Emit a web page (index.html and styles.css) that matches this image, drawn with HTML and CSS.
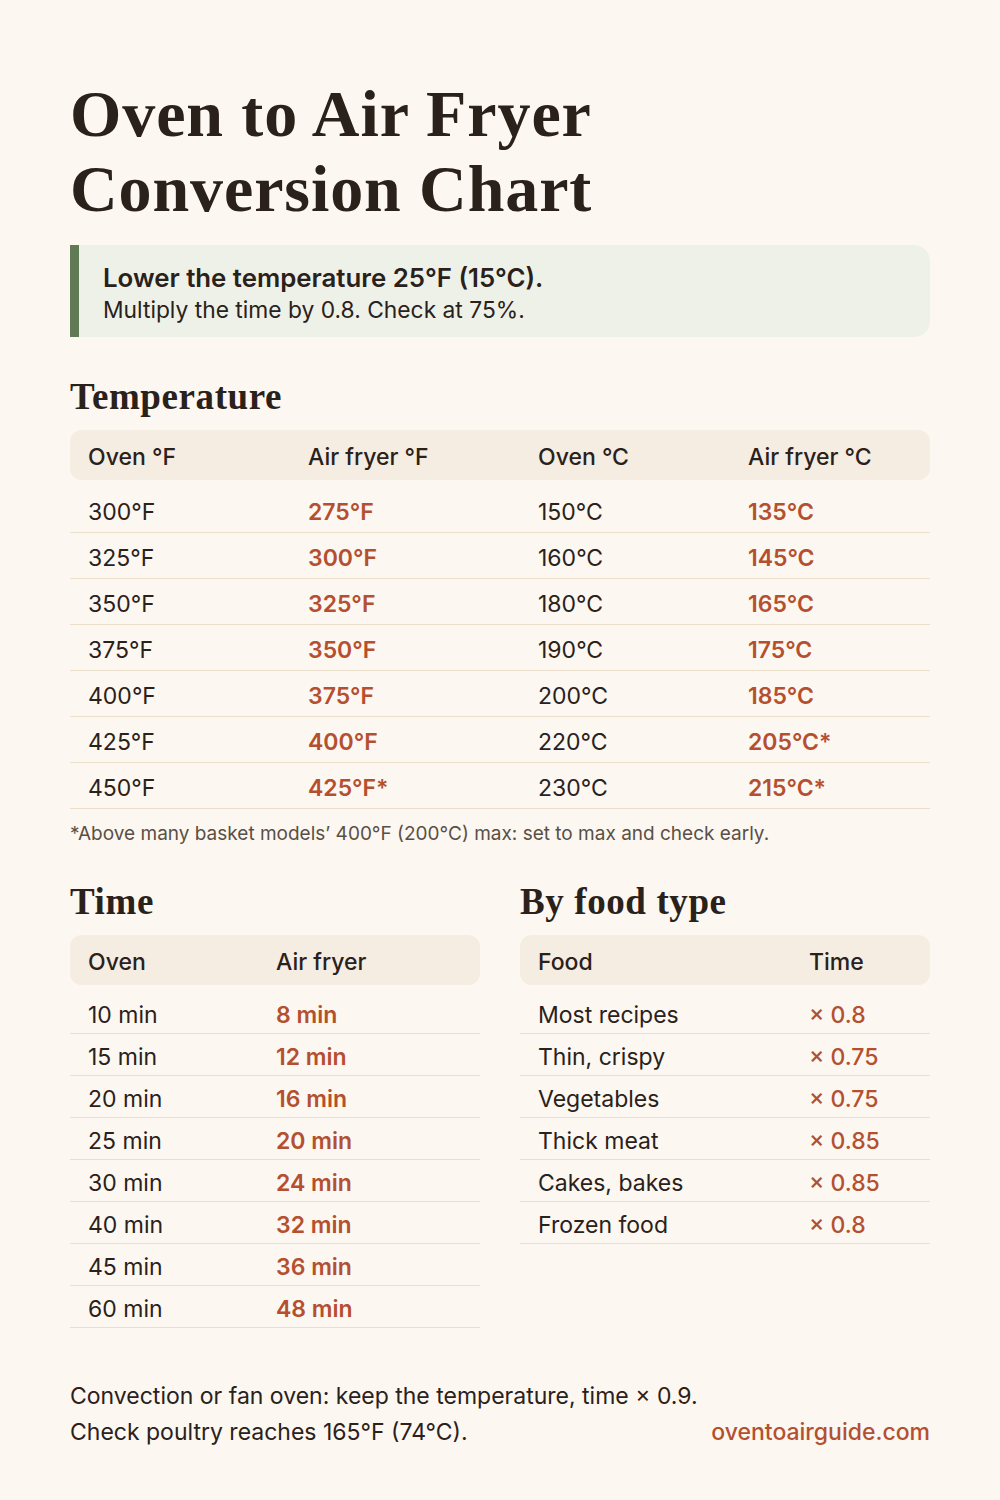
FILE: index.html
```html
<!DOCTYPE html>
<html lang="en">
<head>
<meta charset="utf-8">
<title>Oven to Air Fryer Conversion Chart</title>
<link rel="stylesheet" href="styles.css">
</head>
<body>
<main class="page">
  <h1 class="title">Oven to Air Fryer<br>Conversion Chart</h1>

  <div class="callout">
    <p class="callout-main">Lower the temperature 25°F (15°C).</p>
    <p class="callout-sub">Multiply the time by 0.8. Check at 75%.</p>
  </div>

  <section class="section">
    <h2 class="heading">Temperature</h2>
    <div class="table temp">
      <div class="thead"><span>Oven °F</span><span>Air fryer °F</span><span>Oven °C</span><span>Air fryer °C</span></div>
      <div class="row"><span>300°F</span><span class="hl">275°F</span><span>150°C</span><span class="hl">135°C</span></div>
      <div class="row"><span>325°F</span><span class="hl">300°F</span><span>160°C</span><span class="hl">145°C</span></div>
      <div class="row"><span>350°F</span><span class="hl">325°F</span><span>180°C</span><span class="hl">165°C</span></div>
      <div class="row"><span>375°F</span><span class="hl">350°F</span><span>190°C</span><span class="hl">175°C</span></div>
      <div class="row"><span>400°F</span><span class="hl">375°F</span><span>200°C</span><span class="hl">185°C</span></div>
      <div class="row"><span>425°F</span><span class="hl">400°F</span><span>220°C</span><span class="hl">205°C*</span></div>
      <div class="row"><span>450°F</span><span class="hl">425°F*</span><span>230°C</span><span class="hl">215°C*</span></div>
    </div>
    <p class="note">*Above many basket models’ 400°F (200°C) max: set to max and check early.</p>
  </section>

  <div class="split">
    <section class="col">
      <h2 class="heading">Time</h2>
      <div class="table time">
        <div class="thead"><span>Oven</span><span>Air fryer</span></div>
        <div class="row"><span>10 min</span><span class="hl">8 min</span></div>
        <div class="row"><span>15 min</span><span class="hl">12 min</span></div>
        <div class="row"><span>20 min</span><span class="hl">16 min</span></div>
        <div class="row"><span>25 min</span><span class="hl">20 min</span></div>
        <div class="row"><span>30 min</span><span class="hl">24 min</span></div>
        <div class="row"><span>40 min</span><span class="hl">32 min</span></div>
        <div class="row"><span>45 min</span><span class="hl">36 min</span></div>
        <div class="row"><span>60 min</span><span class="hl">48 min</span></div>
      </div>
    </section>
    <section class="col">
      <h2 class="heading">By food type</h2>
      <div class="table food">
        <div class="thead"><span>Food</span><span>Time</span></div>
        <div class="row"><span>Most recipes</span><span class="hl">× 0.8</span></div>
        <div class="row"><span>Thin, crispy</span><span class="hl">× 0.75</span></div>
        <div class="row"><span>Vegetables</span><span class="hl">× 0.75</span></div>
        <div class="row"><span>Thick meat</span><span class="hl">× 0.85</span></div>
        <div class="row"><span>Cakes, bakes</span><span class="hl">× 0.85</span></div>
        <div class="row"><span>Frozen food</span><span class="hl">× 0.8</span></div>
      </div>
    </section>
  </div>

  <footer class="footer">
    <p class="foot-text">Convection or fan oven: keep the temperature, time × 0.9.<br>Check poultry reaches 165°F (74°C).</p>
    <span class="site">oventoairguide.com</span>
  </footer>
</main>
</body>
</html>
```
FILE: styles.css
```css
* { box-sizing: border-box; }
html, body { margin: 0; padding: 0; }
body {
  background: #fcf7f1;
  color: #2a211b;
  font-family: Inter, "Noto Sans", sans-serif;
  width: 1000px;
  height: 1500px;
}
.page {
  padding: 76px 70px 0 70px;
}
p { margin: 0; }
.title {
  font-family: "Liberation Serif", "DejaVu Serif", serif;
  font-weight: 700;
  font-size: 66px;
  line-height: 75px;
  margin: 0;
  letter-spacing: 0.9px;
  color: #2a211b;
}
.callout {
  margin-top: 19px;
  background: #eef1e8;
  border-left: 9px solid #5f7a55;
  border-radius: 0 16px 16px 0;
  padding: 17px 24px 13px 24px;
  height: 92px;
}
.callout-main {
  font-size: 25.8px;
  font-weight: 600;
  line-height: 32px;
}
.callout-sub {
  font-size: 22.8px;
  line-height: 32px;
}
.section { margin-top: 37px; }
.heading {
  font-family: "Liberation Serif", "DejaVu Serif", serif;
  font-weight: 700;
  font-size: 37px;
  line-height: 42px;
  letter-spacing: 0.6px;
  padding-top: 2px;
  margin: 0 0 12px 0;
}
.table { font-size: 23px; }
.thead {
  display: grid;
  background: #f5ece2;
  border-radius: 12px;
  height: 50px;
  padding-top: 3px;
  align-items: center;
  font-weight: 500;
  margin-bottom: 7px;
}
.row {
  display: grid;
  align-items: center;
  padding-top: 4px;
  border-bottom: 1px solid #ecdfcc;
}
.thead span:first-child, .row span:first-child { padding-left: 18px; }
.temp .thead, .temp .row { grid-template-columns: 238px 230px 210px 1fr; }
.temp .row { height: 46px; }
.time .thead, .time .row { grid-template-columns: 206px 1fr; }
.food .thead, .food .row { grid-template-columns: 289px 1fr; }
.time .row, .food .row { height: 42px; }
.hl { color: #b4502f; font-weight: 600; }
.food .hl { font-weight: 500; }
.note {
  margin-top: 12px;
  font-size: 19px;
  color: #5a4f45;
  line-height: 26px;
}
.split {
  display: flex;
  gap: 40px;
  margin-top: 32px;
}
.col { flex: 1; }
.footer {
  margin-top: 50px;
  display: flex;
  justify-content: space-between;
  align-items: flex-end;
  font-size: 23px;
  line-height: 36px;
}
.site { color: #b4502f; font-weight: 500; }
```
